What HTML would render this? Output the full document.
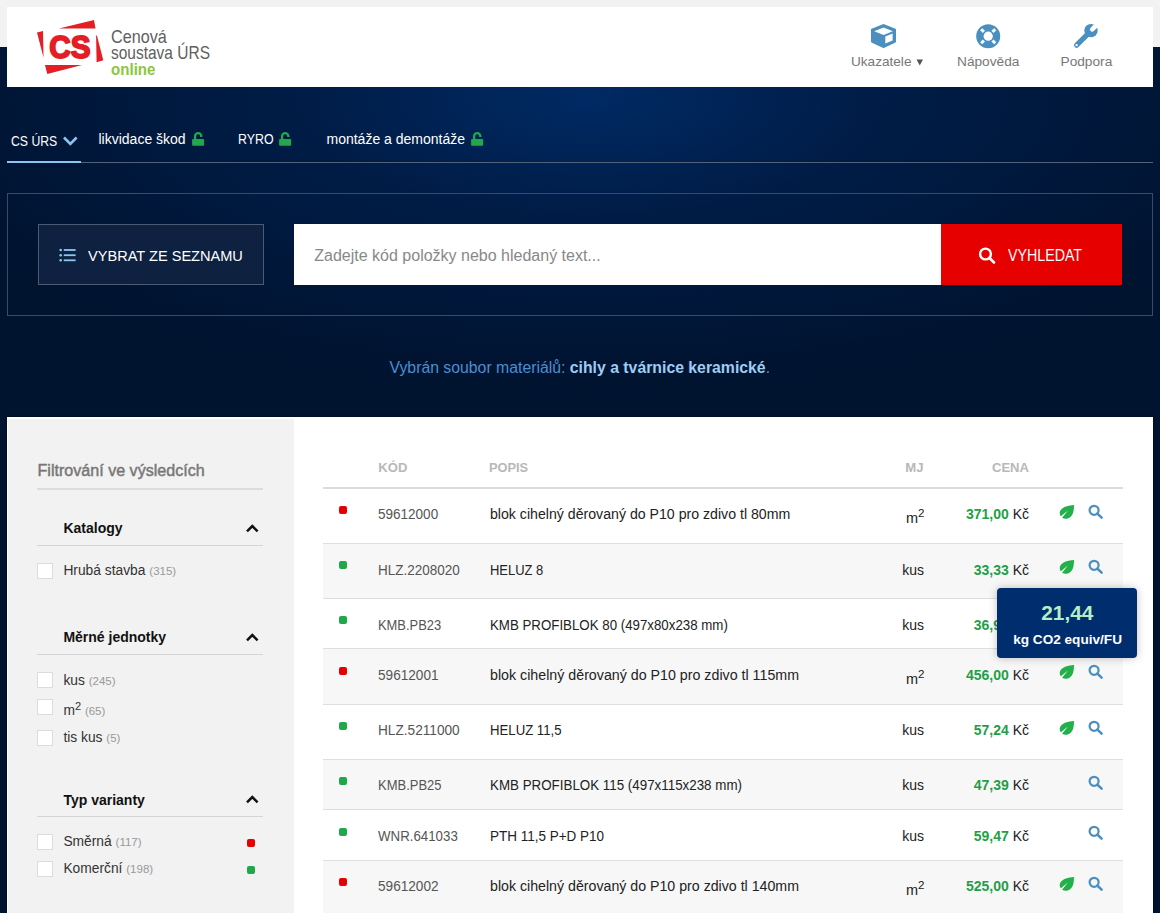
<!DOCTYPE html>
<html><head><meta charset="utf-8"><style>
*{margin:0;padding:0;box-sizing:border-box}
html,body{width:1160px;height:913px;overflow:hidden}
body{font-family:"Liberation Sans",sans-serif;background:#f2f2f2;position:relative}
.a{position:absolute}
.t{position:absolute;white-space:nowrap;line-height:1}
.cb{position:absolute;left:37px;width:16px;height:16px;background:#fff;border:1px solid #dcdcdc}
.ln{position:absolute;background:#dedede;height:1px}
.dot{position:absolute;width:8px;height:8px;border-radius:2px}
.r{background:#e60000}.g{background:#1fa84a}
sup{font-size:0.8em;vertical-align:0;position:relative;top:-0.5em}
</style></head><body>
<div class="a" style="left:0;top:47px;width:1160px;height:866px;background:#00132f"></div>
<div class="a" style="left:0;top:47px;width:1160px;height:370px;background:radial-gradient(ellipse 720px 290px at 590px 50px,rgba(0,45,106,0.9) 0%,rgba(0,36,90,0.55) 40%,rgba(0,19,47,0) 100%)"></div>
<div class="a" style="left:7px;top:7px;width:1146px;height:80px;background:#fff"></div>
<svg class="a" style="left:0;top:0" width="110" height="80" viewBox="0 0 110 80">
<polygon points="37,32.5 43,31 43.5,57.5" fill="#e31e24"/>
<polygon points="59,28.5 94,20 95.5,28.5" fill="#e31e24"/>
<polygon points="96.1,35.6 96.9,35.6 103.3,60.3 96.6,62.3" fill="#e31e24"/>
<polygon points="45,65 82,65 47.3,74" fill="#e31e24"/>
<text x="49.3" y="58.4" style="font-family:'Liberation Sans';font-weight:bold;font-size:32px" fill="#e31e24" stroke="#e31e24" stroke-width="1.9" stroke-linejoin="round" textLength="41.2" lengthAdjust="spacingAndGlyphs">CS</text>
</svg>
<div class="t" style="left:110.5px;top:27.92px;font-size:18.4px;color:#606060;transform:scaleX(0.8788);transform-origin:0 0;">Cenová</div>
<div class="t" style="left:110.8px;top:43.52px;font-size:18.4px;color:#606060;transform:scaleX(0.8419);transform-origin:0 0;">soustava ÚRS</div>
<div class="t" style="left:111px;top:62.15px;font-size:16.6px;color:#8cc63f;font-weight:bold;transform:scaleX(0.9095);transform-origin:0 0;">online</div>
<svg class="a" style="left:870px;top:23px" width="27" height="26" viewBox="870 23 27 26">
<path d="M883.5,24 L895.5,28.8 Q896,29 896,29.6 L896,41.6 Q896,42.2 895.5,42.5 L883.8,48 Q883.5,48.1 883.2,48 L871.5,42.5 Q871,42.2 871,41.6 L871,29.6 Q871,29 871.5,28.8 Z" fill="#4a8fbf"/>
<path d="M874.2,31.3 L883.6,27.6 L892.8,31.3 L883.6,35 Z" fill="#fff"/>
<path d="M885.3,36.5 L892.6,33.6 L892.6,40.6 L885.3,43.6 Z" fill="#fff"/>
</svg>
<div class="t" style="left:851px;top:54.99px;font-size:13.6px;color:#777;">Ukazatele</div>
<svg class="a" style="left:916px;top:59px" width="8" height="7" viewBox="0 0 8 7"><path d="M0.5,0.5 L7,0.5 L3.75,6.5 Z" fill="#555"/></svg>
<svg class="a" style="left:975px;top:23px" width="27" height="27" viewBox="975 23 27 27">
<circle cx="988.2" cy="36.2" r="12" fill="#4a8fbf"/>
<circle cx="988.2" cy="36.2" r="4.6" fill="#fff"/>
<g stroke="#fff" stroke-width="3">
<line x1="981.2" y1="29.200000000000003" x2="983.9000000000001" y2="31.900000000000002"/><line x1="995.2" y1="29.200000000000003" x2="992.5" y2="31.900000000000002"/>
<line x1="981.2" y1="43.2" x2="983.9000000000001" y2="40.5"/><line x1="995.2" y1="43.2" x2="992.5" y2="40.5"/>
</g></svg>
<div class="t" style="left:957px;top:54.90px;font-size:13.7px;color:#777;">Nápověda</div>
<svg class="a" style="left:1070px;top:20px" width="32" height="30" viewBox="1070 20 32 30">
<path d="M1076.6,45.2 L1087.5,34.3" stroke="#4a8fbf" stroke-width="5.2" stroke-linecap="round"/>
<circle cx="1091" cy="30.6" r="6.7" fill="#4a8fbf"/>
<path d="M1092.2,29.4 L1097.5,24.1" stroke="#fff" stroke-width="4.6" stroke-linecap="round"/>
<circle cx="1076.6" cy="45.1" r="1.2" fill="#fff"/>
</svg>
<div class="t" style="left:1060.5px;top:54.90px;font-size:13.7px;color:#777;">Podpora</div>
<div class="t" style="left:11px;top:134.15px;font-size:14px;color:#fff;transform:scaleX(0.8743);transform-origin:0 0;">CS ÚRS</div>
<svg class="a" style="left:62px;top:135px" width="17" height="12" viewBox="0 0 17 12"><path d="M2,2.5 L8.3,9 L14.6,2.5" fill="none" stroke="#8ec5f0" stroke-width="2.6"/></svg>
<div class="t" style="left:98.5px;top:132.15px;font-size:14px;color:#fff;">likvidace škod</div>
<svg class="a" style="left:192px;top:132px" width="14" height="14" viewBox="0 0 14 14"><path d="M3.1,7.2 L3.1,4.3 A3.1,3.1 0 0 1 9.3,4.3 L9.3,5.1" fill="none" stroke="#22a84b" stroke-width="2.3"/><rect x="0.1" y="7" width="12" height="6.8" rx="1" fill="#22a84b"/></svg>
<div class="t" style="left:238px;top:132.15px;font-size:14px;color:#fff;transform:scaleX(0.8850);transform-origin:0 0;">RYRO</div>
<svg class="a" style="left:279px;top:132px" width="14" height="14" viewBox="0 0 14 14"><path d="M3.1,7.2 L3.1,4.3 A3.1,3.1 0 0 1 9.3,4.3 L9.3,5.1" fill="none" stroke="#22a84b" stroke-width="2.3"/><rect x="0.1" y="7" width="12" height="6.8" rx="1" fill="#22a84b"/></svg>
<div class="t" style="left:326.5px;top:132.15px;font-size:14px;color:#fff;">montáže a demontáže</div>
<svg class="a" style="left:471px;top:132px" width="14" height="14" viewBox="0 0 14 14"><path d="M3.1,7.2 L3.1,4.3 A3.1,3.1 0 0 1 9.3,4.3 L9.3,5.1" fill="none" stroke="#22a84b" stroke-width="2.3"/><rect x="0.1" y="7" width="12" height="6.8" rx="1" fill="#22a84b"/></svg>
<div class="a" style="left:7px;top:162px;width:1146px;height:1px;background:#536179"></div>
<div class="a" style="left:7px;top:161px;width:74px;height:2px;background:#8ec5f0"></div>
<div class="a" style="left:7px;top:193px;width:1146px;height:123px;border:1px solid #3b4b66"></div>
<div class="a" style="left:38px;top:224px;width:226px;height:61px;border:1px solid #4b5b76;background:#0e2140"></div>
<svg class="a" style="left:58px;top:248px" width="19" height="15" viewBox="0 0 19 15"><g fill="#8ec5f0"><circle cx="2.7" cy="2" r="1.3"/><circle cx="2.7" cy="7.2" r="1.3"/><circle cx="2.7" cy="12.3" r="1.3"/><rect x="5.8" y="1.1" width="11.8" height="1.8"/><rect x="5.8" y="6.3" width="11.8" height="1.8"/><rect x="5.8" y="11.4" width="11.8" height="1.8"/></g></svg>
<div class="t" style="left:87.6px;top:248.73px;font-size:14.5px;color:#fff;transform:scaleX(1.0048);transform-origin:0 0;">VYBRAT ZE SEZNAMU</div>
<div class="a" style="left:294px;top:224px;width:647px;height:61px;background:#fff"></div>
<div class="t" style="left:314.3px;top:247.96px;font-size:16px;color:#888;">Zadejte kód položky nebo hledaný text...</div>
<div class="a" style="left:941px;top:224px;width:181px;height:61px;background:#e60000"></div>
<svg class="a" style="left:976px;top:244px" width="22" height="22" viewBox="976 244 22 22"><circle cx="985.5" cy="254" r="5.4" fill="none" stroke="#fff" stroke-width="2.4"/><line x1="989.5" y1="258" x2="994" y2="262.5" stroke="#fff" stroke-width="2.6" stroke-linecap="round"/></svg>
<div class="t" style="left:1008.3px;top:247.86px;font-size:16px;color:#fff;transform:scaleX(0.8888);transform-origin:0 0;">VYHLEDAT</div>
<div class="t" style="left:389.5px;top:359.63px;font-size:15.8px;color:#4a8fd0">Vybrán soubor materiálů: <b style="color:#9dcdf3;font-size:15.8px">cihly a tvárnice keramické</b>.</div>
<div class="a" style="left:7px;top:417px;width:1146px;height:496px;background:#fff;box-shadow:0 0 2px rgba(0,0,10,0.7)"></div>
<div class="a" style="left:8px;top:419px;width:286px;height:494px;background:#f2f2f2"></div>
<div class="t" style="left:37.5px;top:461.57px;font-size:16.1px;color:#777;-webkit-text-stroke:0.45px #777;">Filtrování ve výsledcích</div>
<div class="a" style="left:37px;top:488px;width:226px;height:2px;background:#dcdcdc"></div>
<div class="t" style="left:63.4px;top:521.15px;font-size:14px;color:#111;font-weight:bold;">Katalogy</div>
<svg class="a" style="left:245px;top:523px" width="15" height="10" viewBox="0 0 15 10"><path d="M2,8.3 L7.3,3 L12.6,8.3" fill="none" stroke="#111" stroke-width="2.5"/></svg>
<div class="a" style="left:37px;top:545px;width:226px;height:1px;background:#d4d4d4"></div>
<div class="cb" style="top:563px"></div>
<div class="t" style="left:63.4px;top:564.32px;font-size:13.8px;color:#333">Hrubá stavba <span style="font-size:11.5px;color:#999">(315)</span></div>
<div class="t" style="left:63.4px;top:630.35px;font-size:14px;color:#111;font-weight:bold;">Měrné jednotky</div>
<svg class="a" style="left:245px;top:632px" width="15" height="10" viewBox="0 0 15 10"><path d="M2,8.3 L7.3,3 L12.6,8.3" fill="none" stroke="#111" stroke-width="2.5"/></svg>
<div class="a" style="left:37px;top:654px;width:226px;height:1px;background:#d4d4d4"></div>
<div class="cb" style="top:672px"></div>
<div class="t" style="left:63.4px;top:673.52px;font-size:13.8px;color:#333">kus <span style="font-size:11.5px;color:#999">(245)</span></div>
<div class="cb" style="top:699px"></div>
<div class="t" style="left:63.4px;top:704.02px;font-size:13.8px;color:#333">m<sup>2</sup> <span style="font-size:11.5px;color:#999">(65)</span></div>
<div class="cb" style="top:730px"></div>
<div class="t" style="left:63.4px;top:731.12px;font-size:13.8px;color:#333">tis kus <span style="font-size:11.5px;color:#999">(5)</span></div>
<div class="t" style="left:63.4px;top:792.95px;font-size:14px;color:#111;font-weight:bold;">Typ varianty</div>
<svg class="a" style="left:245px;top:794px" width="15" height="10" viewBox="0 0 15 10"><path d="M2,8.3 L7.3,3 L12.6,8.3" fill="none" stroke="#111" stroke-width="2.5"/></svg>
<div class="a" style="left:37px;top:816px;width:226px;height:1px;background:#d4d4d4"></div>
<div class="cb" style="top:834px"></div>
<div class="t" style="left:63.4px;top:834.82px;font-size:13.8px;color:#333">Směrná <span style="font-size:11.5px;color:#999">(117)</span></div>
<div class="dot r" style="left:247px;top:839px"></div>
<div class="cb" style="top:861px"></div>
<div class="t" style="left:63.4px;top:862.32px;font-size:13.8px;color:#333">Komerční <span style="font-size:11.5px;color:#999">(198)</span></div>
<div class="dot g" style="left:247px;top:866px"></div>
<div class="t" style="left:378.3px;top:461.31px;font-size:13.1px;color:#b8b8b8;font-weight:bold;">KÓD</div>
<div class="t" style="left:489.4px;top:461.31px;font-size:13.1px;color:#b8b8b8;font-weight:bold;transform:scaleX(0.9779);transform-origin:0 0;">POPIS</div>
<div class="t" style="left:905.3px;top:461.31px;font-size:13.1px;color:#b8b8b8;font-weight:bold;">MJ</div>
<div class="t" style="left:992.2px;top:461.31px;font-size:13.1px;color:#b8b8b8;font-weight:bold;transform:scaleX(0.9947);transform-origin:0 0;">CENA</div>
<div class="a" style="left:323px;top:487px;width:800px;height:2px;background:#dcdcdc"></div>
<div class="a" style="left:323px;top:543px;width:800px;height:1px;background:#dedede"></div>
<div class="dot r" style="left:339px;top:506px"></div>
<div class="t" style="left:377.9px;top:506.95px;font-size:14px;color:#555;transform:scaleX(0.9657);transform-origin:0 0;">59612000</div>
<div class="t" style="left:489.7px;top:506.95px;font-size:14px;color:#222;transform:scaleX(1.0100);transform-origin:0 0;">blok cihelný děrovaný do P10 pro zdivo tl 80mm</div>
<div class="t" style="left:906px;top:510.73px;font-size:14.5px;color:#222">m<sup>2</sup></div>
<div class="t" style="right:131px;top:506.95px;font-size:14px;color:#222"><b style="color:#1f9f47">371,00</b> Kč</div>
<svg class="a" style="left:1058px;top:503px" width="18" height="17" viewBox="0 0 18 17"><path d="M16.1,1.9 C10,2.3 4.6,3.8 2.4,7.5 C1.3,9.5 1.5,11.8 2.9,13.3 L9.9,7.4 L4.1,14.7 C5.6,15.8 7.5,16 9,15.7 C12.8,14.8 14.8,11.8 15.5,8 C15.9,6 16,4 16.1,1.9 Z" fill="#22b04b"/></svg>
<svg class="a" style="left:1087px;top:503px" width="18" height="17" viewBox="0 0 18 17"><circle cx="7.1" cy="7.3" r="4.5" fill="none" stroke="#4a8fbf" stroke-width="2.2"/><line x1="10.4" y1="10.6" x2="14.6" y2="14.6" stroke="#4a8fbf" stroke-width="2.6" stroke-linecap="round"/></svg>
<div class="a" style="left:323px;top:544px;width:800px;height:54px;background:#f7f7f7"></div>
<div class="a" style="left:323px;top:598px;width:800px;height:1px;background:#dedede"></div>
<div class="dot g" style="left:339px;top:561px"></div>
<div class="t" style="left:377.9px;top:562.65px;font-size:14px;color:#555;transform:scaleX(0.9629);transform-origin:0 0;">HLZ.2208020</div>
<div class="t" style="left:489.7px;top:562.65px;font-size:14px;color:#222;transform:scaleX(0.9257);transform-origin:0 0;">HELUZ 8</div>
<div class="t" style="right:236px;top:562.65px;font-size:14px;color:#222">kus</div>
<div class="t" style="right:131px;top:562.65px;font-size:14px;color:#222"><b style="color:#1f9f47">33,33</b> Kč</div>
<svg class="a" style="left:1058px;top:558px" width="18" height="17" viewBox="0 0 18 17"><path d="M16.1,1.9 C10,2.3 4.6,3.8 2.4,7.5 C1.3,9.5 1.5,11.8 2.9,13.3 L9.9,7.4 L4.1,14.7 C5.6,15.8 7.5,16 9,15.7 C12.8,14.8 14.8,11.8 15.5,8 C15.9,6 16,4 16.1,1.9 Z" fill="#22b04b"/></svg>
<svg class="a" style="left:1087px;top:558px" width="18" height="17" viewBox="0 0 18 17"><circle cx="7.1" cy="7.3" r="4.5" fill="none" stroke="#4a8fbf" stroke-width="2.2"/><line x1="10.4" y1="10.6" x2="14.6" y2="14.6" stroke="#4a8fbf" stroke-width="2.6" stroke-linecap="round"/></svg>
<div class="a" style="left:323px;top:648px;width:800px;height:1px;background:#dedede"></div>
<div class="dot g" style="left:339px;top:616px"></div>
<div class="t" style="left:377.9px;top:618.45px;font-size:14px;color:#555;transform:scaleX(0.9214);transform-origin:0 0;">KMB.PB23</div>
<div class="t" style="left:489.7px;top:618.45px;font-size:14px;color:#222;transform:scaleX(0.9493);transform-origin:0 0;">KMB PROFIBLOK 80 (497x80x238 mm)</div>
<div class="t" style="right:236px;top:618.45px;font-size:14px;color:#222">kus</div>
<div class="t" style="right:131px;top:618.45px;font-size:14px;color:#222"><b style="color:#1f9f47">36,90</b> Kč</div>
<svg class="a" style="left:1087px;top:613px" width="18" height="17" viewBox="0 0 18 17"><circle cx="7.1" cy="7.3" r="4.5" fill="none" stroke="#4a8fbf" stroke-width="2.2"/><line x1="10.4" y1="10.6" x2="14.6" y2="14.6" stroke="#4a8fbf" stroke-width="2.6" stroke-linecap="round"/></svg>
<div class="a" style="left:323px;top:649px;width:800px;height:55px;background:#f7f7f7"></div>
<div class="a" style="left:323px;top:704px;width:800px;height:1px;background:#dedede"></div>
<div class="dot r" style="left:339px;top:667px"></div>
<div class="t" style="left:377.9px;top:667.85px;font-size:14px;color:#555;transform:scaleX(0.9714);transform-origin:0 0;">59612001</div>
<div class="t" style="left:489.7px;top:667.85px;font-size:14px;color:#222;transform:scaleX(1.0164);transform-origin:0 0;">blok cihelný děrovaný do P10 pro zdivo tl 115mm</div>
<div class="t" style="left:906px;top:671.63px;font-size:14.5px;color:#222">m<sup>2</sup></div>
<div class="t" style="right:131px;top:667.85px;font-size:14px;color:#222"><b style="color:#1f9f47">456,00</b> Kč</div>
<svg class="a" style="left:1058px;top:663px" width="18" height="17" viewBox="0 0 18 17"><path d="M16.1,1.9 C10,2.3 4.6,3.8 2.4,7.5 C1.3,9.5 1.5,11.8 2.9,13.3 L9.9,7.4 L4.1,14.7 C5.6,15.8 7.5,16 9,15.7 C12.8,14.8 14.8,11.8 15.5,8 C15.9,6 16,4 16.1,1.9 Z" fill="#22b04b"/></svg>
<svg class="a" style="left:1087px;top:663px" width="18" height="17" viewBox="0 0 18 17"><circle cx="7.1" cy="7.3" r="4.5" fill="none" stroke="#4a8fbf" stroke-width="2.2"/><line x1="10.4" y1="10.6" x2="14.6" y2="14.6" stroke="#4a8fbf" stroke-width="2.6" stroke-linecap="round"/></svg>
<div class="a" style="left:323px;top:759px;width:800px;height:1px;background:#dedede"></div>
<div class="dot g" style="left:339px;top:722px"></div>
<div class="t" style="left:377.9px;top:722.85px;font-size:14px;color:#555;transform:scaleX(0.9750);transform-origin:0 0;">HLZ.5211000</div>
<div class="t" style="left:489.7px;top:722.85px;font-size:14px;color:#222;transform:scaleX(0.9414);transform-origin:0 0;">HELUZ 11,5</div>
<div class="t" style="right:236px;top:722.85px;font-size:14px;color:#222">kus</div>
<div class="t" style="right:131px;top:722.85px;font-size:14px;color:#222"><b style="color:#1f9f47">57,24</b> Kč</div>
<svg class="a" style="left:1058px;top:719px" width="18" height="17" viewBox="0 0 18 17"><path d="M16.1,1.9 C10,2.3 4.6,3.8 2.4,7.5 C1.3,9.5 1.5,11.8 2.9,13.3 L9.9,7.4 L4.1,14.7 C5.6,15.8 7.5,16 9,15.7 C12.8,14.8 14.8,11.8 15.5,8 C15.9,6 16,4 16.1,1.9 Z" fill="#22b04b"/></svg>
<svg class="a" style="left:1087px;top:719px" width="18" height="17" viewBox="0 0 18 17"><circle cx="7.1" cy="7.3" r="4.5" fill="none" stroke="#4a8fbf" stroke-width="2.2"/><line x1="10.4" y1="10.6" x2="14.6" y2="14.6" stroke="#4a8fbf" stroke-width="2.6" stroke-linecap="round"/></svg>
<div class="a" style="left:323px;top:760px;width:800px;height:49px;background:#f7f7f7"></div>
<div class="a" style="left:323px;top:809px;width:800px;height:1px;background:#dedede"></div>
<div class="dot g" style="left:339px;top:777px"></div>
<div class="t" style="left:377.9px;top:777.85px;font-size:14px;color:#555;transform:scaleX(0.9271);transform-origin:0 0;">KMB.PB25</div>
<div class="t" style="left:489.7px;top:777.85px;font-size:14px;color:#222;transform:scaleX(0.9543);transform-origin:0 0;">KMB PROFIBLOK 115 (497x115x238 mm)</div>
<div class="t" style="right:236px;top:777.85px;font-size:14px;color:#222">kus</div>
<div class="t" style="right:131px;top:777.85px;font-size:14px;color:#222"><b style="color:#1f9f47">47,39</b> Kč</div>
<svg class="a" style="left:1087px;top:774px" width="18" height="17" viewBox="0 0 18 17"><circle cx="7.1" cy="7.3" r="4.5" fill="none" stroke="#4a8fbf" stroke-width="2.2"/><line x1="10.4" y1="10.6" x2="14.6" y2="14.6" stroke="#4a8fbf" stroke-width="2.6" stroke-linecap="round"/></svg>
<div class="a" style="left:323px;top:860px;width:800px;height:1px;background:#dedede"></div>
<div class="dot g" style="left:339px;top:828px"></div>
<div class="t" style="left:377.9px;top:829.05px;font-size:14px;color:#555;transform:scaleX(0.9493);transform-origin:0 0;">WNR.641033</div>
<div class="t" style="left:489.7px;top:829.05px;font-size:14px;color:#222;transform:scaleX(0.9636);transform-origin:0 0;">PTH 11,5 P+D P10</div>
<div class="t" style="right:236px;top:829.05px;font-size:14px;color:#222">kus</div>
<div class="t" style="right:131px;top:829.05px;font-size:14px;color:#222"><b style="color:#1f9f47">59,47</b> Kč</div>
<svg class="a" style="left:1087px;top:824px" width="18" height="17" viewBox="0 0 18 17"><circle cx="7.1" cy="7.3" r="4.5" fill="none" stroke="#4a8fbf" stroke-width="2.2"/><line x1="10.4" y1="10.6" x2="14.6" y2="14.6" stroke="#4a8fbf" stroke-width="2.6" stroke-linecap="round"/></svg>
<div class="a" style="left:323px;top:861px;width:800px;height:79px;background:#f7f7f7"></div>
<div class="a" style="left:323px;top:940px;width:800px;height:1px;background:#dedede"></div>
<div class="dot r" style="left:339px;top:878px"></div>
<div class="t" style="left:377.9px;top:879.45px;font-size:14px;color:#555;transform:scaleX(0.9714);transform-origin:0 0;">59612002</div>
<div class="t" style="left:489.7px;top:879.45px;font-size:14px;color:#222;transform:scaleX(1.0129);transform-origin:0 0;">blok cihelný děrovaný do P10 pro zdivo tl 140mm</div>
<div class="t" style="left:906px;top:883.23px;font-size:14.5px;color:#222">m<sup>2</sup></div>
<div class="t" style="right:131px;top:879.45px;font-size:14px;color:#222"><b style="color:#1f9f47">525,00</b> Kč</div>
<svg class="a" style="left:1058px;top:875px" width="18" height="17" viewBox="0 0 18 17"><path d="M16.1,1.9 C10,2.3 4.6,3.8 2.4,7.5 C1.3,9.5 1.5,11.8 2.9,13.3 L9.9,7.4 L4.1,14.7 C5.6,15.8 7.5,16 9,15.7 C12.8,14.8 14.8,11.8 15.5,8 C15.9,6 16,4 16.1,1.9 Z" fill="#22b04b"/></svg>
<svg class="a" style="left:1087px;top:875px" width="18" height="17" viewBox="0 0 18 17"><circle cx="7.1" cy="7.3" r="4.5" fill="none" stroke="#4a8fbf" stroke-width="2.2"/><line x1="10.4" y1="10.6" x2="14.6" y2="14.6" stroke="#4a8fbf" stroke-width="2.6" stroke-linecap="round"/></svg>
<div class="a" style="left:997px;top:588px;width:140px;height:70px;background:#002d6e;border-radius:4px;box-shadow:0 0 8px rgba(0,0,0,0.25)"></div>
<div class="t" style="left:1041.3px;top:603.39px;font-size:20.8px;color:#b5efc4;font-weight:bold;">21,44</div>
<div class="t" style="left:1013.2px;top:632.79px;font-size:13.6px;color:#fff;font-weight:bold;">kg CO2 equiv/FU</div>
</body></html>
